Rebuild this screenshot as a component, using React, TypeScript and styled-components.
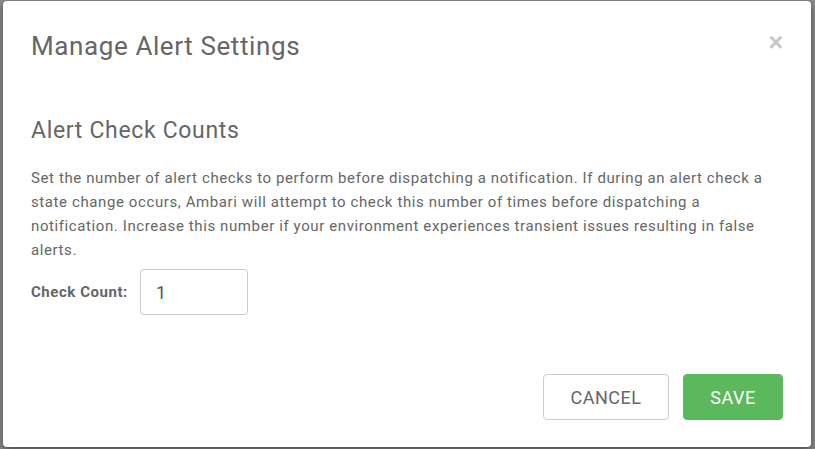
import styled, { createGlobalStyle } from 'styled-components'

const GlobalStyle = createGlobalStyle`
  html, body {
    margin: 0;
    padding: 0;
    background: #8c8c8c;
    font-family: Roboto, 'Liberation Sans', Arial, sans-serif;
  }
`

const Backdrop = styled.div`
  width: 815px;
  height: 449px;
  box-sizing: border-box;
  padding: 1px 4px 2px 3px;
  overflow: hidden;
`

const Modal = styled.div`
  height: 446px;
  background: #fff;
  border-radius: 4px;
  box-shadow: 0 3px 9px rgba(0, 0, 0, 0.5);
  display: flex;
  flex-direction: column;
  padding: 0 28px;
  box-sizing: border-box;
  color: #666;
`

const Header = styled.div`
  display: flex;
  justify-content: space-between;
  align-items: flex-start;
  padding-top: 30px;
`

const Title = styled.h4`
  margin: 0;
  font-size: 26px;
  line-height: 30px;
  letter-spacing: 0.6px;
  font-weight: 400;
  color: #666;
`

const Close = styled.button`
  border: 0;
  background: none;
  padding: 0;
  margin: -1px 0 0 0;
  font-family: 'Liberation Sans', Arial, sans-serif;
  font-size: 25px;
  font-weight: 700;
  line-height: 25px;
  color: #c6c6c6;
  cursor: pointer;
`

const Body = styled.div`
  flex: 1;
  display: flex;
  flex-direction: column;
`

const SectionTitle = styled.h5`
  margin: 56px 0 0;
  font-size: 23px;
  line-height: 28px;
  letter-spacing: 0.67px;
  font-weight: 400;
  color: #666;
`

const Text = styled.p`
  margin: 21px 0 0;
  font-size: 15px;
  line-height: 24px;
  letter-spacing: 0.6px;
  color: #666;
`

const FieldRow = styled.div`
  display: flex;
  align-items: center;
  gap: 12px;
  margin-top: 7px;
`

const Label = styled.label`
  font-size: 15px;
  font-weight: 700;
  letter-spacing: 0.55px;
  color: #666;
`

const Input = styled.input`
  width: 108px;
  height: 46px;
  box-sizing: border-box;
  border: 1px solid #ccc;
  border-radius: 4px;
  padding: 0 15px;
  font-family: Roboto, 'Liberation Sans', Arial, sans-serif;
  font-size: 18px;
  color: #555;
  outline: none;
`

const Footer = styled.div`
  display: flex;
  justify-content: flex-end;
  gap: 14px;
  padding-bottom: 27px;
`

const Button = styled.button<{ $primary?: boolean }>`
  width: ${(p) => (p.$primary ? 100 : 126)}px;
  height: 46px;
  box-sizing: border-box;
  padding: 0;
  border-radius: 4px;
  font-family: Roboto, 'Liberation Sans', Arial, sans-serif;
  font-size: 18px;
  letter-spacing: 0.5px;
  text-transform: uppercase;
  cursor: pointer;
  border: 1px solid ${(p) => (p.$primary ? '#5cb85c' : '#ccc')};
  background: ${(p) => (p.$primary ? '#5cb85c' : '#fff')};
  color: ${(p) => (p.$primary ? '#fff' : '#666')};
`

export default function App() {
  return (
    <>
      <GlobalStyle />
      <Backdrop>
        <Modal>
          <Header>
            <Title>Manage Alert Settings</Title>
            <Close aria-label="Close">×</Close>
          </Header>
          <Body>
            <SectionTitle>Alert Check Counts</SectionTitle>
            <Text>
              Set the number of alert checks to perform before dispatching a notification. If during an
              alert check a state change occurs, Ambari will attempt to check this number of times before
              dispatching a notification. Increase this number if your environment experiences transient
              issues resulting in false alerts.
            </Text>
            <FieldRow>
              <Label>Check Count:</Label>
              <Input defaultValue="1" />
            </FieldRow>
          </Body>
          <Footer>
            <Button>Cancel</Button>
            <Button $primary>Save</Button>
          </Footer>
        </Modal>
      </Backdrop>
    </>
  )
}
